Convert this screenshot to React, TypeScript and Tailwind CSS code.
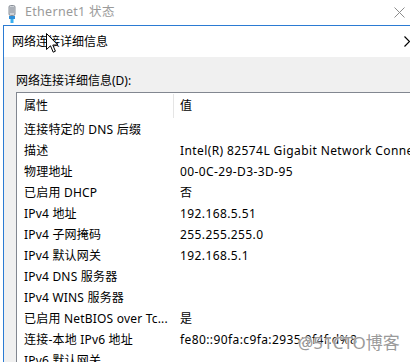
import React from "react";

const rows: [string, string][] = [
  ["连接特定的 DNS 后缀", ""],
  ["描述", "Intel(R) 82574L Gigabit Network Connection"],
  ["物理地址", "00-0C-29-D3-3D-95"],
  ["已启用 DHCP", "否"],
  ["IPv4 地址", "192.168.5.51"],
  ["IPv4 子网掩码", "255.255.255.0"],
  ["IPv4 默认网关", "192.168.5.1"],
  ["IPv4 DNS 服务器", ""],
  ["IPv4 WINS 服务器", ""],
  ["已启用 NetBIOS over Tc...", "是"],
  ["连接-本地 IPv6 地址", "fe80::90fa:c9fa:2935:9f4f:d%8"],
  ["IPv6 默认网关", ""],
];

export default function App() {
  return (
    <div
      className="relative w-[410px] h-[362px] overflow-hidden bg-white text-[12px] text-black flex flex-col"
      style={{ fontFamily: '"Noto Sans", "Noto Sans CJK SC", sans-serif' }}
    >
      {/* title bar */}
      <div className="h-[25px] shrink-0 flex items-center">
        <svg width="8" height="18" viewBox="0 0 8 18" className="ml-[8px] mt-[2px]">
          <rect x="1" y="0.5" width="6" height="10" rx="1.5" fill="#cfd3d8" stroke="#8a9099" />
          <rect x="2.5" y="2" width="1" height="6" fill="#8a9099" />
          <rect x="4.5" y="2" width="1" height="6" fill="#8a9099" />
          <rect x="1" y="11" width="6" height="3" fill="#2f8fd8" />
          <rect x="2.5" y="14" width="3" height="4" fill="#39b0f0" />
        </svg>
        <span className="ml-[9px] text-[12.5px] tracking-[0.3px] text-[#9a9a9a] leading-none">Ethernet1 状态</span>
        <div className="flex-1" />
        <svg width="11" height="11" viewBox="0 0 11 11" className="mr-[5px]">
          <path d="M0.5 0.5 L10.5 10.5 M10.5 0.5 L0.5 10.5" stroke="#8c8c8c" strokeWidth="1" />
        </svg>
      </div>

      {/* body */}
      <div className="ml-[3px] border-t border-l border-[#2b7bd3] flex-1 min-h-0 flex flex-col">
        <div className="h-[31px] shrink-0 bg-white flex items-center pl-[8px]">
          <span className="flex-1">网络连接详细信息</span>
          <svg width="6" height="11" viewBox="0 0 6 11" className="shrink-0">
            <path d="M0.5 0.5 L5.5 5.5 L0.5 10.5" fill="none" stroke="#000" strokeWidth="1.2" />
          </svg>
        </div>
        <div className="flex-1 min-h-0 overflow-hidden bg-[#f0f0f0] pl-[12px]">
          <div className="mt-[16px] leading-[16px]">网络连接详细信息(D):</div>
          <div className="mt-[3px] border-t border-l border-[#828790] bg-white h-[300px] whitespace-nowrap">
            <div className="h-[26px] flex items-center">
              <div className="w-[156px] pl-[7px]">属性</div>
              <div className="w-px h-[24px] bg-[#e5e5e5]" />
              <div className="pl-[6px]">值</div>
            </div>
            {rows.map(([k, v]) => (
              <div key={k} className="h-[21px] flex items-center">
                <div className="w-[157px] pl-[7px] shrink-0 tracking-[0.2px]">{k}</div>
                <div className="pl-[6px] tracking-[0.4px]">{v}</div>
              </div>
            ))}
          </div>
        </div>
      </div>

      {/* mouse cursor */}
      <svg
        width="13"
        height="21"
        viewBox="0 0 13 21"
        className="absolute left-[46px] top-[33px]"
      >
        <path
          d="M0.5 0.5 L0.5 16.5 L4.5 12.8 L7.2 19.2 L9.4 18.2 L6.8 12 L11.8 12 Z"
          fill="#fff"
          stroke="#000"
          strokeWidth="1"
          strokeLinejoin="round"
        />
      </svg>

      {/* watermark */}
      <div className="absolute left-[298px] top-[334px] text-[17px] text-[#9a9a9a] leading-none [text-shadow:0_0_2px_#fff,0_0_2px_#fff]">
        @51CTO博客
      </div>
    </div>
  );
}
